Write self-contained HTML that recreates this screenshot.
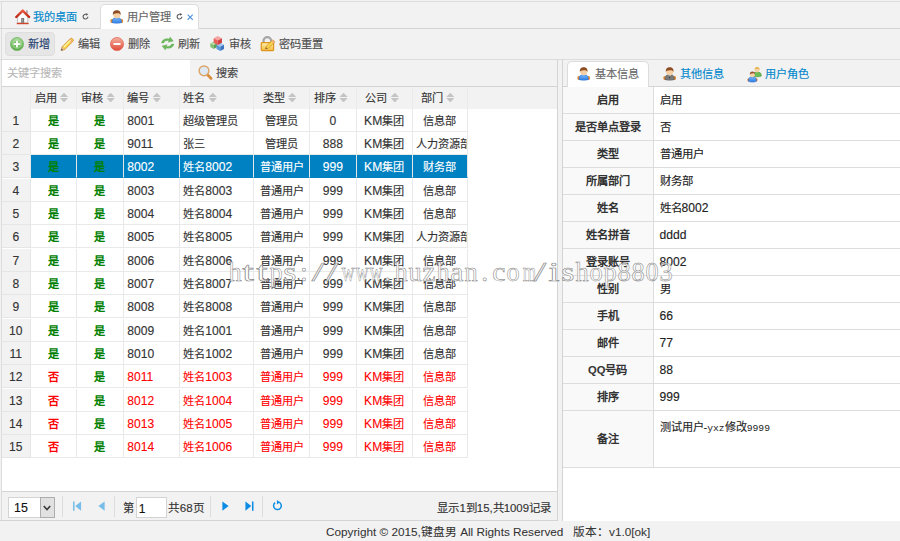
<!DOCTYPE html>
<html lang="zh-CN">
<head>
<meta charset="utf-8">
<title>用户管理</title>
<style>
*{box-sizing:border-box;margin:0;padding:0}
html,body{width:900px;height:541px;overflow:hidden}
body{position:relative;background:#f2f2f2;font-family:"Liberation Sans",sans-serif;font-size:11.2px;color:#333;line-height:1;-webkit-text-stroke:.13px}
.abs{position:absolute}
.ln{position:absolute;background:#d4d4d4}
svg{position:absolute;display:block;overflow:visible}
.t{position:absolute;white-space:nowrap;line-height:14px;height:14px}
/* grid */
#grid{position:absolute;left:2px;top:87px;width:555px;height:405px;background:#fff;overflow:hidden}
#ghead{position:absolute;left:0;top:0;width:555px;height:21.5px;background:#f2f2f2}
.row{position:absolute;left:0;height:23.333px;width:465.670px}
.c{position:absolute;top:0;height:100%;border-right:1px solid #e9e9e9;border-bottom:1px solid #e9e9e9;line-height:24.600px;white-space:nowrap;overflow:hidden;font-size:11.200px}
.hc{position:absolute;top:0;height:21.5px;border-right:1px solid #ebebeb;line-height:22px;white-space:nowrap;overflow:hidden;font-size:11.2px;color:#333}
.rn{background:#f2f2f2;text-align:center;left:0;width:28.5px;border-right:1px solid #e6e6e6;border-bottom:1px solid #e6e6e6}
.n{font-size:12.100px}
.ctr{text-align:center}
.hc.ctr{padding-right:4px}
.lft{padding-left:3.5px}
.g{color:#008000;font-weight:bold;-webkit-text-stroke:0}
.r{color:#f00;-webkit-text-stroke:.1px}
.rb{color:#f00;font-weight:bold;-webkit-text-stroke:0}
.sel .c{background:#0081c2;color:#fff;border-right-color:#e6e6e6;border-bottom-color:#0081c2}
.sel .rn{background:#f2f2f2;color:#333;border-bottom-color:#e6e6e6}
.sel .g{color:#008000}
.sort{display:inline-block;position:relative;width:8.200px;height:11px;margin-left:3.400px;vertical-align:-1.500px}
.sort:before{content:"";position:absolute;left:0;top:.2px;width:8.200px;height:4.400px;background:#c4c4c4;clip-path:polygon(50% 0,100% 100%,0 100%)}
.sort:after{content:"";position:absolute;left:0;top:5.600px;width:8.200px;height:4.400px;background:#c4c4c4;clip-path:polygon(0 0,100% 0,50% 100%)}
#wm{position:absolute;left:227.500px;top:256px;white-space:nowrap;font-family:"Liberation Serif",serif;font-size:28px;line-height:32px;color:rgba(255,255,255,.88);-webkit-text-stroke:.55px #868686}
#wm b{display:inline-block;width:13.920px;text-align:center;font-weight:normal}
/* property table */
.pl{position:absolute;left:563px;width:90.5px;background:#f9f9f9;border-right:1px solid #ddd;border-bottom:1px solid #ddd;text-align:center;font-weight:bold;font-size:11.2px;color:#333;-webkit-text-stroke:0}
.pv{position:absolute;left:653.5px;width:247px;background:#fff;border-bottom:1px solid #ddd;padding-left:6px;font-size:11.4px;color:#222}
</style>
</head>
<body>
<!-- outer frame lines -->
<div class="ln" style="left:0;top:1px;width:900px;height:1px;background:#dcdcdc"></div>
<div class="ln" style="left:1px;top:1px;width:1px;height:520px;background:#dcdcdc"></div>

<!-- main tabs header -->
<div class="ln" style="left:0;top:28px;width:900px;height:1px"></div>
<div class="abs" style="left:100px;top:4px;width:99px;height:25px;background:#fff;border:1px solid #dcdcdc;border-bottom:0;border-radius:5px 5px 0 0"></div>
<div class="t" style="left:32.500px;top:9.700px;color:#0088cc">我的桌面</div>
<div class="t" style="left:127px;top:10px;color:#666">用户管理</div>

<!-- toolbar -->
<div class="ln" style="left:0;top:59px;width:900px;height:1px;background:#dcdcdc"></div>
<div class="abs" style="left:5px;top:32px;width:49.500px;height:23.500px;background:#e6e6e6;border:1px solid #dedede;border-radius:4px"></div>
<div class="t" style="left:28px;top:37px;color:#1d3c6e">新增</div>
<div class="t" style="left:78px;top:37px;color:#4c4c4c">编辑</div>
<div class="t" style="left:128px;top:37px;color:#4c4c4c">删除</div>
<div class="t" style="left:178px;top:37px;color:#4c4c4c">刷新</div>
<div class="t" style="left:229px;top:37px;color:#4c4c4c">审核</div>
<div class="t" style="left:279px;top:37px;color:#4c4c4c">密码重置</div>

<!-- search row -->
<div class="abs" style="left:2px;top:60px;width:188px;height:26px;background:#fff"></div>
<div class="t" style="left:7px;top:66px;color:#b8b8b8">关键字搜索</div>
<div class="t" style="left:216px;top:66px;color:#444">搜索</div>
<div class="ln" style="left:2px;top:86px;width:555px;height:1px"></div>
<div class="ln" style="left:557px;top:59px;width:1px;height:462px"></div>

<!-- grid -->
<div id="grid">
<!--GRID-->
<div id="ghead"><div class="hc" style="left:0;width:28.5px"></div><div class="hc ctr" style="left:28.5px;width:46.67px">启用<i class="sort"></i></div><div class="hc ctr" style="left:75.17px;width:46.67px">审核<i class="sort"></i></div><div class="hc lft" style="left:121.83px;width:56px">编号<i class="sort"></i></div><div class="hc lft" style="left:177.83px;width:74.17px">姓名<i class="sort"></i></div><div class="hc ctr" style="left:252px;width:56px">类型<i class="sort"></i></div><div class="hc ctr" style="left:308px;width:46.67px">排序<i class="sort"></i></div><div class="hc ctr" style="left:354.67px;width:56px">公司<i class="sort"></i></div><div class="hc ctr" style="left:410.67px;width:55px">部门<i class="sort"></i></div></div>
<div class="row" style="top:21.50px"><div class="c rn n">1</div><div class="c ctr g" style="left:28.5px;width:46.67px">是</div><div class="c ctr g" style="left:75.17px;width:46.67px">是</div><div class="c lft" style="left:121.83px;width:56px"><span class="n">8001</span></div><div class="c lft" style="left:177.83px;width:74.17px">超级管理员</div><div class="c ctr" style="left:252px;width:56px">管理员</div><div class="c ctr" style="left:308px;width:46.67px"><span class="n">0</span></div><div class="c ctr" style="left:354.67px;width:56px"><span class="n">KM</span>集团</div><div class="c ctr" style="left:410.67px;width:55px">信息部</div></div>
<div class="row" style="top:44.83px"><div class="c rn n">2</div><div class="c ctr g" style="left:28.5px;width:46.67px">是</div><div class="c ctr g" style="left:75.17px;width:46.67px">是</div><div class="c lft" style="left:121.83px;width:56px"><span class="n">9011</span></div><div class="c lft" style="left:177.83px;width:74.17px">张三</div><div class="c ctr" style="left:252px;width:56px">管理员</div><div class="c ctr" style="left:308px;width:46.67px"><span class="n">888</span></div><div class="c ctr" style="left:354.67px;width:56px"><span class="n">KM</span>集团</div><div class="c lft" style="left:410.67px;width:55px">人力资源部</div></div>
<div class="row sel" style="top:68.17px"><div class="c rn n">3</div><div class="c ctr g" style="left:28.5px;width:46.67px">是</div><div class="c ctr g" style="left:75.17px;width:46.67px">是</div><div class="c lft" style="left:121.83px;width:56px"><span class="n">8002</span></div><div class="c lft" style="left:177.83px;width:74.17px">姓名<span class="n">8002</span></div><div class="c ctr" style="left:252px;width:56px">普通用户</div><div class="c ctr" style="left:308px;width:46.67px"><span class="n">999</span></div><div class="c ctr" style="left:354.67px;width:56px"><span class="n">KM</span>集团</div><div class="c ctr" style="left:410.67px;width:55px">财务部</div></div>
<div class="row" style="top:91.50px"><div class="c rn n">4</div><div class="c ctr g" style="left:28.5px;width:46.67px">是</div><div class="c ctr g" style="left:75.17px;width:46.67px">是</div><div class="c lft" style="left:121.83px;width:56px"><span class="n">8003</span></div><div class="c lft" style="left:177.83px;width:74.17px">姓名<span class="n">8003</span></div><div class="c ctr" style="left:252px;width:56px">普通用户</div><div class="c ctr" style="left:308px;width:46.67px"><span class="n">999</span></div><div class="c ctr" style="left:354.67px;width:56px"><span class="n">KM</span>集团</div><div class="c ctr" style="left:410.67px;width:55px">信息部</div></div>
<div class="row" style="top:114.83px"><div class="c rn n">5</div><div class="c ctr g" style="left:28.5px;width:46.67px">是</div><div class="c ctr g" style="left:75.17px;width:46.67px">是</div><div class="c lft" style="left:121.83px;width:56px"><span class="n">8004</span></div><div class="c lft" style="left:177.83px;width:74.17px">姓名<span class="n">8004</span></div><div class="c ctr" style="left:252px;width:56px">普通用户</div><div class="c ctr" style="left:308px;width:46.67px"><span class="n">999</span></div><div class="c ctr" style="left:354.67px;width:56px"><span class="n">KM</span>集团</div><div class="c ctr" style="left:410.67px;width:55px">信息部</div></div>
<div class="row" style="top:138.16px"><div class="c rn n">6</div><div class="c ctr g" style="left:28.5px;width:46.67px">是</div><div class="c ctr g" style="left:75.17px;width:46.67px">是</div><div class="c lft" style="left:121.83px;width:56px"><span class="n">8005</span></div><div class="c lft" style="left:177.83px;width:74.17px">姓名<span class="n">8005</span></div><div class="c ctr" style="left:252px;width:56px">普通用户</div><div class="c ctr" style="left:308px;width:46.67px"><span class="n">999</span></div><div class="c ctr" style="left:354.67px;width:56px"><span class="n">KM</span>集团</div><div class="c lft" style="left:410.67px;width:55px">人力资源部</div></div>
<div class="row" style="top:161.50px"><div class="c rn n">7</div><div class="c ctr g" style="left:28.5px;width:46.67px">是</div><div class="c ctr g" style="left:75.17px;width:46.67px">是</div><div class="c lft" style="left:121.83px;width:56px"><span class="n">8006</span></div><div class="c lft" style="left:177.83px;width:74.17px">姓名<span class="n">8006</span></div><div class="c ctr" style="left:252px;width:56px">普通用户</div><div class="c ctr" style="left:308px;width:46.67px"><span class="n">999</span></div><div class="c ctr" style="left:354.67px;width:56px"><span class="n">KM</span>集团</div><div class="c ctr" style="left:410.67px;width:55px">信息部</div></div>
<div class="row" style="top:184.83px"><div class="c rn n">8</div><div class="c ctr g" style="left:28.5px;width:46.67px">是</div><div class="c ctr g" style="left:75.17px;width:46.67px">是</div><div class="c lft" style="left:121.83px;width:56px"><span class="n">8007</span></div><div class="c lft" style="left:177.83px;width:74.17px">姓名<span class="n">8007</span></div><div class="c ctr" style="left:252px;width:56px">普通用户</div><div class="c ctr" style="left:308px;width:46.67px"><span class="n">999</span></div><div class="c ctr" style="left:354.67px;width:56px"><span class="n">KM</span>集团</div><div class="c ctr" style="left:410.67px;width:55px">信息部</div></div>
<div class="row" style="top:208.16px"><div class="c rn n">9</div><div class="c ctr g" style="left:28.5px;width:46.67px">是</div><div class="c ctr g" style="left:75.17px;width:46.67px">是</div><div class="c lft" style="left:121.83px;width:56px"><span class="n">8008</span></div><div class="c lft" style="left:177.83px;width:74.17px">姓名<span class="n">8008</span></div><div class="c ctr" style="left:252px;width:56px">普通用户</div><div class="c ctr" style="left:308px;width:46.67px"><span class="n">999</span></div><div class="c ctr" style="left:354.67px;width:56px"><span class="n">KM</span>集团</div><div class="c ctr" style="left:410.67px;width:55px">信息部</div></div>
<div class="row" style="top:231.50px"><div class="c rn n">10</div><div class="c ctr g" style="left:28.5px;width:46.67px">是</div><div class="c ctr g" style="left:75.17px;width:46.67px">是</div><div class="c lft" style="left:121.83px;width:56px"><span class="n">8009</span></div><div class="c lft" style="left:177.83px;width:74.17px">姓名<span class="n">1001</span></div><div class="c ctr" style="left:252px;width:56px">普通用户</div><div class="c ctr" style="left:308px;width:46.67px"><span class="n">999</span></div><div class="c ctr" style="left:354.67px;width:56px"><span class="n">KM</span>集团</div><div class="c ctr" style="left:410.67px;width:55px">信息部</div></div>
<div class="row" style="top:254.83px"><div class="c rn n">11</div><div class="c ctr g" style="left:28.5px;width:46.67px">是</div><div class="c ctr g" style="left:75.17px;width:46.67px">是</div><div class="c lft" style="left:121.83px;width:56px"><span class="n">8010</span></div><div class="c lft" style="left:177.83px;width:74.17px">姓名<span class="n">1002</span></div><div class="c ctr" style="left:252px;width:56px">普通用户</div><div class="c ctr" style="left:308px;width:46.67px"><span class="n">999</span></div><div class="c ctr" style="left:354.67px;width:56px"><span class="n">KM</span>集团</div><div class="c ctr" style="left:410.67px;width:55px">信息部</div></div>
<div class="row" style="top:278.16px"><div class="c rn n">12</div><div class="c ctr rb" style="left:28.5px;width:46.67px">否</div><div class="c ctr g" style="left:75.17px;width:46.67px">是</div><div class="c lft r" style="left:121.83px;width:56px"><span class="n">8011</span></div><div class="c lft r" style="left:177.83px;width:74.17px">姓名<span class="n">1003</span></div><div class="c ctr r" style="left:252px;width:56px">普通用户</div><div class="c ctr r" style="left:308px;width:46.67px"><span class="n">999</span></div><div class="c ctr r" style="left:354.67px;width:56px"><span class="n">KM</span>集团</div><div class="c ctr r" style="left:410.67px;width:55px">信息部</div></div>
<div class="row" style="top:301.50px"><div class="c rn n">13</div><div class="c ctr rb" style="left:28.5px;width:46.67px">否</div><div class="c ctr g" style="left:75.17px;width:46.67px">是</div><div class="c lft r" style="left:121.83px;width:56px"><span class="n">8012</span></div><div class="c lft r" style="left:177.83px;width:74.17px">姓名<span class="n">1004</span></div><div class="c ctr r" style="left:252px;width:56px">普通用户</div><div class="c ctr r" style="left:308px;width:46.67px"><span class="n">999</span></div><div class="c ctr r" style="left:354.67px;width:56px"><span class="n">KM</span>集团</div><div class="c ctr r" style="left:410.67px;width:55px">信息部</div></div>
<div class="row" style="top:324.83px"><div class="c rn n">14</div><div class="c ctr rb" style="left:28.5px;width:46.67px">否</div><div class="c ctr g" style="left:75.17px;width:46.67px">是</div><div class="c lft r" style="left:121.83px;width:56px"><span class="n">8013</span></div><div class="c lft r" style="left:177.83px;width:74.17px">姓名<span class="n">1005</span></div><div class="c ctr r" style="left:252px;width:56px">普通用户</div><div class="c ctr r" style="left:308px;width:46.67px"><span class="n">999</span></div><div class="c ctr r" style="left:354.67px;width:56px"><span class="n">KM</span>集团</div><div class="c ctr r" style="left:410.67px;width:55px">信息部</div></div>
<div class="row" style="top:348.16px"><div class="c rn n">15</div><div class="c ctr rb" style="left:28.5px;width:46.67px">否</div><div class="c ctr g" style="left:75.17px;width:46.67px">是</div><div class="c lft r" style="left:121.83px;width:56px"><span class="n">8014</span></div><div class="c lft r" style="left:177.83px;width:74.17px">姓名<span class="n">1006</span></div><div class="c ctr r" style="left:252px;width:56px">普通用户</div><div class="c ctr r" style="left:308px;width:46.67px"><span class="n">999</span></div><div class="c ctr r" style="left:354.67px;width:56px"><span class="n">KM</span>集团</div><div class="c ctr r" style="left:410.67px;width:55px">信息部</div></div>
<!--/GRID-->
</div>

<!-- pager -->
<div class="abs" style="left:2px;top:492px;width:555px;height:28px;background:#f2f2f2"></div>
<div class="ln" style="left:2px;top:491px;width:555px;height:1px"></div>
<div class="ln" style="left:0;top:520px;width:558px;height:1px"></div>

<!-- right panel -->
<div class="abs" style="left:563px;top:87px;width:337px;height:434px;background:#fff"></div>
<div class="ln" style="left:562px;top:59px;width:1px;height:462px"></div>
<div class="ln" style="left:562px;top:86px;width:338px;height:1px"></div>
<div class="abs" style="left:567px;top:61px;width:82px;height:26px;background:#fff;border:1px solid #dcdcdc;border-bottom:0;border-radius:5px 5px 0 0"></div>
<div class="t" style="left:594.500px;top:67px;color:#666">基本信息</div>
<div class="t" style="left:680px;top:67px;color:#0088cc">其他信息</div>
<div class="t" style="left:765px;top:67px;color:#0088cc">用户角色</div>

<!--PROP-->
<div class="pl" style="top:87px;height:27px;line-height:27.400px">启用</div><div class="pv" style="top:87px;height:27px;line-height:27.400px">启用</div>
<div class="pl" style="top:114px;height:27px;line-height:27.400px">是否单点登录</div><div class="pv" style="top:114px;height:27px;line-height:27.400px">否</div>
<div class="pl" style="top:141px;height:27px;line-height:27.400px">类型</div><div class="pv" style="top:141px;height:27px;line-height:27.400px">普通用户</div>
<div class="pl" style="top:168px;height:27px;line-height:27.400px">所属部门</div><div class="pv" style="top:168px;height:27px;line-height:27.400px">财务部</div>
<div class="pl" style="top:195px;height:27px;line-height:27.400px">姓名</div><div class="pv" style="top:195px;height:27px;line-height:27.400px">姓名<span class="n">8002</span></div>
<div class="pl" style="top:222px;height:27px;line-height:27.400px">姓名拼音</div><div class="pv" style="top:222px;height:27px;line-height:27.400px"><span class="n">dddd</span></div>
<div class="pl" style="top:249px;height:27px;line-height:27.400px">登录账号</div><div class="pv" style="top:249px;height:27px;line-height:27.400px"><span class="n">8002</span></div>
<div class="pl" style="top:276px;height:27px;line-height:27.400px">性别</div><div class="pv" style="top:276px;height:27px;line-height:27.400px">男</div>
<div class="pl" style="top:303px;height:27px;line-height:27.400px">手机</div><div class="pv" style="top:303px;height:27px;line-height:27.400px"><span class="n">66</span></div>
<div class="pl" style="top:330px;height:27px;line-height:27.400px">邮件</div><div class="pv" style="top:330px;height:27px;line-height:27.400px"><span class="n">77</span></div>
<div class="pl" style="top:357px;height:27px;line-height:27.400px">QQ号码</div><div class="pv" style="top:357px;height:27px;line-height:27.400px"><span class="n">88</span></div>
<div class="pl" style="top:384px;height:27px;line-height:27.400px">排序</div><div class="pv" style="top:384px;height:27px;line-height:27.400px"><span class="n">999</span></div>
<div class="pl" style="top:411px;height:57px;line-height:57.400px">备注</div><div class="pv" style="top:411px;height:57px;line-height:14px;padding-top:8.700px"><span style="font-size:11.200px;-webkit-text-stroke:.1px">测试用户-<span style="font-family:'Liberation Mono',monospace;font-size:9.700px;-webkit-text-stroke:0">yxz</span>修改<span style="font-family:'Liberation Mono',monospace;font-size:9.700px;-webkit-text-stroke:0">9999</span></span></div>
<!--/PROP-->
<!--ICONS-->
<!-- shared defs -->
<svg width="0" height="0" style="left:0;top:0">
<defs>
<linearGradient id="gGreen" x1="0" y1="0" x2="0" y2="1"><stop offset="0" stop-color="#a4d696"/><stop offset="1" stop-color="#58ac48"/></linearGradient>
<linearGradient id="gRed" x1="0" y1="0" x2="0" y2="1"><stop offset="0" stop-color="#f6b0a0"/><stop offset="1" stop-color="#e04c38"/></linearGradient>
<linearGradient id="gBlue" x1="0" y1="0" x2="0" y2="1"><stop offset="0" stop-color="#78b8fc"/><stop offset="1" stop-color="#2c7ce4"/></linearGradient>
<linearGradient id="gRoof" x1="0" y1="0" x2="0" y2="1"><stop offset="0" stop-color="#ec5a40"/><stop offset="1" stop-color="#c02814"/></linearGradient>
<linearGradient id="gLock" x1="0" y1="0" x2="0" y2="1"><stop offset="0" stop-color="#fdf0b4"/><stop offset="1" stop-color="#f6bc38"/></linearGradient>
<symbol id="uBlue" viewBox="0 0 16 16">
 <ellipse cx="2.200" cy="13" rx="1.900" ry="2.300" fill="#e88c34"/>
 <ellipse cx="13.800" cy="13" rx="1.900" ry="2.300" fill="#e88c34"/>
 <path d="M2.500 15C2.200 10.600 4.400 8.800 8 8.800S13.800 10.600 13.500 15C11 16.300 5 16.300 2.500 15Z" fill="url(#gBlue)" stroke="#2868c4" stroke-width=".7"/>
 <ellipse cx="8" cy="5.400" rx="4.300" ry="4.300" fill="#f6d0a4"/>
 <path d="M3.500 5.800C2.900 1.800 5.400.2 8 .2S13.100 1.800 12.500 5.800C11.900 4.200 10.600 3.600 8 3.800S4.100 4.200 3.500 5.800Z" fill="#8e4c22"/>
</symbol>
<symbol id="uGray" viewBox="0 0 16 16">
 <ellipse cx="2.200" cy="13" rx="1.900" ry="2.300" fill="#e88c34"/>
 <ellipse cx="13.800" cy="13" rx="1.900" ry="2.300" fill="#e88c34"/>
 <path d="M2.500 15C2.200 10.600 4.400 8.800 8 8.800S13.800 10.600 13.500 15C11 16.300 5 16.300 2.500 15Z" fill="#7a7a7a" stroke="#555" stroke-width=".7"/>
 <path d="M6.6 9.2L8 12.5 9.4 9.2Z" fill="#f4f4f4"/>
 <path d="M7.6 9.6H8.4L8.7 13 8 14 7.3 13Z" fill="#444"/>
 <ellipse cx="8" cy="5.400" rx="4.300" ry="4.300" fill="#f6d0a4"/>
 <path d="M3.500 5.800C2.900 1.800 5.400.2 8 .2S13.100 1.800 12.500 5.800C11.900 4.200 10.600 3.600 8 3.800S4.100 4.200 3.500 5.800Z" fill="#8e4c22"/>
</symbol>
<symbol id="rc" viewBox="0 0 8 8">
 <path d="M6.700 4.300A2.700 2.700 0 1 1 4.600 1.500" fill="none" stroke="#5c5c5c" stroke-width="1.300"/>
 <path d="M4.300 0L7.300 1.400 4.700 3.200Z" fill="#5c5c5c"/>
</symbol>
</defs>
</svg>

<!-- tab icons -->
<svg viewBox="0 0 16 16" width="15.400" height="15.400" style="left:14.900px;top:8.500px">
 <rect x="11.400" y="1.400" width="1.900" height="4.400" fill="#a8a8a8"/>
 <path d="M2.700 8.200L8 3 13.300 8.200V14.500H2.700Z" fill="#fdfdfd" stroke="#b0b0b0" stroke-width=".8"/>
 <rect x="6.500" y="9.400" width="3" height="5.100" fill="#686868"/>
 <rect x="7.300" y="10" width="1.400" height="4.500" fill="#9a9a9a"/>
 <path d="M1.300 8.300L8 1.600 14.700 8.300" fill="none" stroke="url(#gRoof)" stroke-width="2.500" stroke-linecap="round" stroke-linejoin="round"/>
 <rect x="1.800" y="14.400" width="12.400" height="1.400" fill="#d4442c"/>
</svg>
<svg width="7" height="7" style="left:82.300px;top:13.200px"><use href="#rc"/></svg>
<svg width="13.6" height="13.6" style="left:109.6px;top:9.6px"><use href="#uBlue"/></svg>
<svg width="7" height="7" style="left:176.300px;top:13px"><use href="#rc"/></svg>
<svg viewBox="0 0 8 8" width="6.4" height="6.4" style="left:186.7px;top:13.6px"><path d="M.8.8L7.2 7.2M7.2.8L.8 7.2" stroke="#5294e0" stroke-width="1.400"/></svg>

<!-- toolbar icons -->
<svg viewBox="0 0 16 16" width="14" height="14" style="left:9.8px;top:36.7px">
 <circle cx="8" cy="8" r="7.5" fill="url(#gGreen)" stroke="#68b058" stroke-width=".8"/>
 <circle cx="8" cy="8" r="4.8" fill="none" stroke="#d4ecc8" stroke-width=".9" opacity=".6"/>
 <path d="M8 5V11M5 8H11" stroke="#fff" stroke-width="2" stroke-linecap="round"/>
</svg>
<svg viewBox="0 0 16 16" width="15.200" height="14" style="left:59.800px;top:36.600px">
 <path d="M.6 15.400L1.700 11.200 11 1.900Q12.200.7 13.500 1.900L14.100 2.500Q15.300 3.800 14.100 5L4.800 14.300Z" fill="#f8d648" stroke="#d4882c" stroke-width=".9"/>
 <path d="M10.600 3L13 5.400" stroke="#f0a888" stroke-width="2.200"/>
 <path d="M3.600 11.400L11.400 3.600" stroke="#fdf4b0" stroke-width="1.300"/>
 <path d="M.6 15.400L1.700 11.200 4.800 14.300Z" fill="#ecc8a0" stroke="#c89060" stroke-width=".4"/>
 <path d="M.6 15.400L1.200 13.200 2.800 14.800Z" fill="#484848"/>
</svg>
<svg viewBox="0 0 16 16" width="14" height="14" style="left:110.3px;top:36.7px">
 <circle cx="8" cy="8" r="7.5" fill="url(#gRed)" stroke="#e0604c" stroke-width=".8"/>
 <path d="M4.800 8H11.200" stroke="#fff" stroke-width="2.100" stroke-linecap="round"/>
</svg>
<svg viewBox="0 0 16 16" width="15.400" height="15" style="left:159.800px;top:36.200px">
 <path d="M1.400 7.400C1.800 3.800 5.800 2 9.800 3.300L10.500 1 14 5.400 8.600 6.700 9.300 5C6.800 4.400 4.600 5.200 3.800 7.400Z" fill="#6cb85c" stroke="#58a448" stroke-width=".35"/>
 <path d="M14.600 8.600C14.200 12.200 10.200 14 6.200 12.700L5.500 15 2 10.600 7.400 9.300 6.700 11C9.200 11.600 11.400 10.800 12.200 8.600Z" fill="#6cb85c" stroke="#58a448" stroke-width=".35"/>
</svg>
<svg viewBox="0 0 16 16" width="15.6" height="15" style="left:209.6px;top:36.1px">
 <g transform="translate(0,5.6)"><path d="M0 2L3.6 0 7.2 2 3.6 4Z" fill="#b4dca8"/><path d="M0 2L3.6 4V8.2L0 6.2Z" fill="#80c070"/><path d="M7.2 2L3.6 4V8.2L7.2 6.2Z" fill="#5ca04c"/></g>
 <g transform="translate(6.6,7)"><path d="M0 2.2L4 0 8 2.2 4 4.4Z" fill="#a0c8f0"/><path d="M0 2.2L4 4.4V9L0 6.8Z" fill="#5c98dc"/><path d="M8 2.2L4 4.4V9L8 6.8Z" fill="#3c74c0"/></g>
 <g transform="translate(3.6,0)"><path d="M0 2.4L4.4 0 8.8 2.4 4.4 4.8Z" fill="#f6a4a0"/><path d="M0 2.4L4.4 4.8V9.6L0 7.2Z" fill="#ea5c58"/><path d="M8.8 2.4L4.4 4.8V9.6L8.8 7.2Z" fill="#d04040"/></g>
</svg>
<svg viewBox="0 0 16 16" width="16" height="15.200" style="left:260px;top:35.900px">
 <path d="M3.300 7.600V5.200A4 4 0 0 1 11.300 5.200V7.600" fill="none" stroke="#a6a6a6" stroke-width="2.400"/>
 <rect x=".9" y="7" width="13" height="8.400" rx=".9" fill="url(#gLock)" stroke="#e0941c" stroke-width="1.300"/>
 <path d="M5.400 13.600L6.200 10.800 13 4 15.200 6.200 8.400 13Z" fill="#f8d448" stroke="#cc842c" stroke-width=".7"/>
 <path d="M12.200 4.800L14.400 7" stroke="#f0a884" stroke-width="1.500"/>
 <path d="M5.400 13.600L5.900 11.900 7.100 13.100Z" fill="#444"/>
</svg>

<!-- search icon -->
<svg viewBox="0 0 16 16" width="15" height="15" style="left:197.600px;top:64.600px">
 <path d="M9.400 9.600L14 14.400" stroke="#d88c3c" stroke-width="2.800" stroke-linecap="round"/>
 <circle cx="6.400" cy="6.200" r="5.200" fill="#dfe9f5" stroke="#dca468" stroke-width="1.500"/>
</svg>

<!-- right tab icons -->
<svg width="13.400" height="13.600" style="left:576.800px;top:67.400px"><use href="#uBlue"/></svg>
<svg width="13.400" height="13.600" style="left:662.500px;top:67.400px"><use href="#uGray"/></svg>
<svg viewBox="0 0 16 16" width="15" height="15.200" style="left:747.300px;top:66.500px">
 <path d="M6.400 9.600C6.200 6.200 8 5.200 10.800 5.200S15.400 6.200 15.200 9.600C13.200 10.600 8.400 10.600 6.400 9.600Z" fill="#6cbc54" stroke="#3c8c2c" stroke-width=".6"/>
 <ellipse cx="10.800" cy="3.100" rx="2.500" ry="2.700" fill="#f6d2a8"/>
 <path d="M8.200 3.300C7.800.900 9.200 0 10.800 0S13.800.900 13.400 3.300C12.900 2.100 12.200 1.700 10.800 1.800S8.700 2.100 8.200 3.300Z" fill="#e8b040"/>
 <ellipse cx="1.600" cy="13.600" rx="1.300" ry="1.700" fill="#e88c34"/>
 <ellipse cx="10" cy="13.600" rx="1.300" ry="1.700" fill="#e88c34"/>
 <path d="M1.600 15.200C1.400 11.400 3 10.400 5.800 10.400S10.200 11.400 10 15.200C8 16.200 3.600 16.200 1.600 15.200Z" fill="url(#gBlue)" stroke="#2868c4" stroke-width=".6"/>
 <ellipse cx="5.800" cy="8" rx="2.600" ry="2.800" fill="#f6d2a8"/>
 <path d="M3.100 8.200C2.700 5.600 4.100 4.700 5.800 4.700S8.900 5.600 8.500 8.200C8 7 7.300 6.600 5.800 6.700S3.600 7 3.100 8.200Z" fill="#96522a"/>
</svg>

<!--/ICONS-->
<!--PAGER-->
<!-- pager widgets -->
<div class="abs" style="left:7.500px;top:497px;width:47.500px;height:20.500px;background:#fff;border:1px solid #d4d4d4"></div>
<div class="abs" style="left:39.500px;top:497px;width:15.500px;height:20.500px;background:#e1e1e1;border:1px solid #adadad"></div>
<svg viewBox="0 0 8 6" width="8" height="6" style="left:43.300px;top:504.500px"><path d="M.8 1L4 4.600 7.200 1" fill="none" stroke="#3a3a3a" stroke-width="1.600"/></svg>
<div class="t" style="left:14px;top:500.500px;font-size:12.400px;color:#111">15</div>
<div class="ln" style="left:62px;top:496px;width:1px;height:21px;background:#dcdcdc"></div>
<svg viewBox="0 0 10 12" width="8.500" height="10.200" style="left:72.800px;top:501.100px"><path d="M0 .5H1.800V11.500H0ZM9.500.5V11.500L2.600 6Z" fill="#78bce8"/></svg>
<svg viewBox="0 0 10 12" preserveAspectRatio="none" width="7" height="10.200" style="left:98.200px;top:501.100px"><path d="M9.500.5V11.500L.5 6Z" fill="#78bce8"/></svg>
<div class="ln" style="left:114px;top:496px;width:1px;height:21px;background:#dcdcdc"></div>
<div class="t" style="left:122.500px;top:500.500px;color:#333">第</div>
<div class="abs" style="left:136px;top:496.500px;width:30.500px;height:21px;background:#fff;border:1px solid #d4d4d4"></div>
<div class="t" style="left:138.700px;top:501.800px;font-size:12px;color:#111">1</div>
<div class="t" style="left:167.800px;top:500.500px;color:#333;font-size:11.600px">共68页</div>
<div class="ln" style="left:210px;top:496px;width:1px;height:21px;background:#dcdcdc"></div>
<svg viewBox="0 0 10 12" preserveAspectRatio="none" width="7" height="10.200" style="left:221.600px;top:501.100px"><path d="M.5.5V11.500L9.500 6Z" fill="#0c8ce4"/></svg>
<svg viewBox="0 0 10 12" width="8.500" height="10.200" style="left:245.200px;top:501.100px"><path d="M8.200.5H10V11.500H8.200ZM.5.500V11.500L7.400 6Z" fill="#0c8ce4"/></svg>
<div class="ln" style="left:262px;top:496px;width:1px;height:21px;background:#dcdcdc"></div>
<svg viewBox="0 0 12 12" width="11" height="11" style="left:272.200px;top:500.300px"><path d="M7.600 2.400A4.200 4.200 0 1 1 3.400 2.900" fill="none" stroke="#0c8ce4" stroke-width="1.600"/><path d="M5.400 0L8.600 2.400 5.400 4.800Z" fill="#0c8ce4"/></svg>
<div class="t" style="right:349px;top:500.500px;color:#333;font-size:11.400px">显示1到15,共1009记录</div>
<!-- watermark -->
<div id="wm"><b style="transform:scaleX(0.94)">h</b><b style="transform:scaleX(1.48)">t</b><b style="transform:scaleX(1.48)">t</b><b style="transform:scaleX(0.94)">p</b><b style="transform:scaleX(1.21)">s</b><b>:</b><b style="transform:scaleX(1.60)">/</b><b style="transform:scaleX(1.60)">/</b><b style="transform:scaleX(0.65)">w</b><b style="transform:scaleX(0.65)">w</b><b style="transform:scaleX(0.65)">w</b><b>.</b><b style="transform:scaleX(0.94)">h</b><b style="transform:scaleX(0.94)">u</b><b style="transform:scaleX(1.06)">z</b><b style="transform:scaleX(0.94)">h</b><b style="transform:scaleX(1.06)">a</b><b style="transform:scaleX(0.94)">n</b><b>.</b><b style="transform:scaleX(1.06)">c</b><b style="transform:scaleX(0.94)">o</b><b style="transform:scaleX(0.61)">m</b><b style="transform:scaleX(1.60)">/</b><b style="transform:scaleX(1.48)">i</b><b style="transform:scaleX(1.21)">s</b><b style="transform:scaleX(0.94)">h</b><b style="transform:scaleX(0.94)">o</b><b style="transform:scaleX(0.94)">p</b><b style="transform:scaleX(0.94)">8</b><b style="transform:scaleX(0.94)">8</b><b style="transform:scaleX(0.94)">0</b><b style="transform:scaleX(0.94)">3</b></div>

<!--/PAGER-->
<!-- footer -->
<div class="t" style="left:326px;top:525px;color:#333;font-size:11.750px;-webkit-text-stroke:.05px">Copyright © 2015,键盘男 All Rights Reserved&nbsp;&nbsp; 版本：v1.0[ok]</div>
</body>
</html>
